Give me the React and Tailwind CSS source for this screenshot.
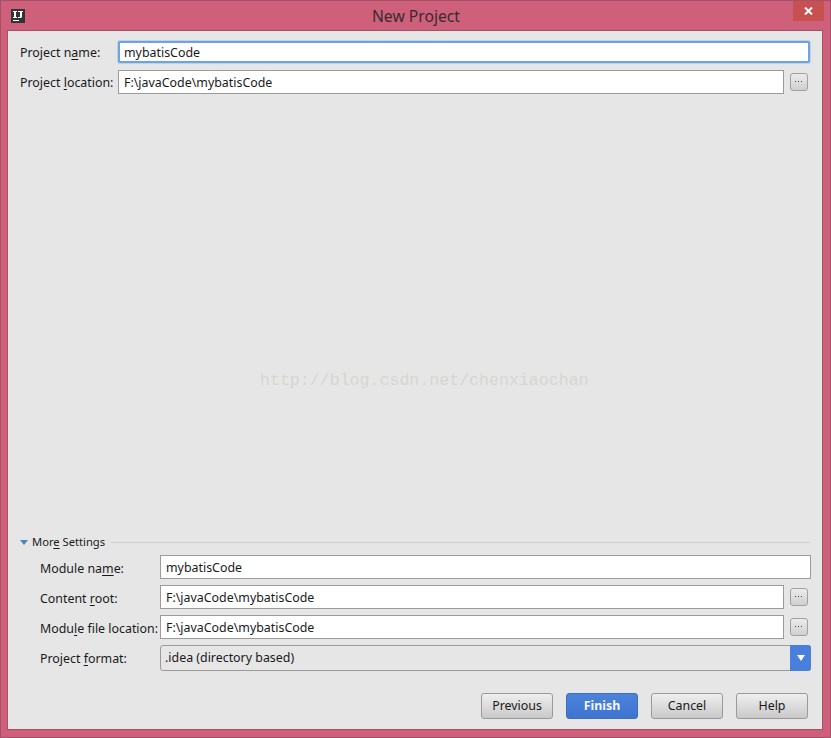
const fontStack = "font-['Noto_Sans',sans-serif]";

function Mnemonic({ before, letter, after }) {
  return (
    <span className="whitespace-nowrap">
      {before}
      <span className="underline underline-offset-2">{letter}</span>
      {after}
    </span>
  );
}

function TextField({ value, className = "" }) {
  return (
    <div className={`flex h-[24px] items-center border border-[#9b9b9b] bg-white pl-[5px] pt-[2px] text-[#1a1a1a] ${className}`}>
      {value}
    </div>
  );
}

function BrowseButton() {
  return (
    <button className="flex h-[18px] w-[18px] shrink-0 items-center justify-center rounded-[3px] border border-[#a0a0a0] bg-gradient-to-b from-[#ececec] to-[#cfcfcf]">
      <svg width="8" height="2" viewBox="0 0 8 2">
        <rect x="0" y="0" width="1" height="1" fill="#444" />
        <rect x="3" y="0" width="1" height="1" fill="#444" />
        <rect x="6" y="0" width="1" height="1" fill="#444" />
      </svg>
    </button>
  );
}

function FooterButton({ label, primary }) {
  const look = primary
    ? "border-[#3f6fb8] bg-gradient-to-b from-[#4a83dc] to-[#3f74cf] font-bold text-[#f2f6fc]"
    : "border-[#9a9a9a] bg-gradient-to-b from-[#efefef] to-[#c9c9c9] text-[#1a1a1a]";
  return (
    <button className={`h-[26px] w-[72px] rounded-[3px] border text-[12.4px] ${look}`}>{label}</button>
  );
}

export default function App() {
  return (
    <div className={`relative flex h-[738px] w-[831px] flex-col border border-[#a64f68] bg-[#cf607c] ${fontStack}`}>
      {/* title bar */}
      <div className="flex h-[29px] shrink-0 items-start">
        {/* IntelliJ logo */}
        <svg width="14" height="14" viewBox="0 0 14 14" className="ml-[10px] mt-[8px] shrink-0">
          <rect width="14" height="14" fill="#333333" />
          <path d="M2 2H6V3H5V8H6V9H2V8H3V3H2Z M7 2H12V3H11V8L10 9H7V8H9V3H7Z M2 11H8V12H2Z" fill="#fff" />
        </svg>
        <div className="flex-1 pl-[14px] pt-[5px] text-center text-[15.7px] leading-[20px] text-[#3a2a2e]">New Project</div>
        <div className="mr-[6px] flex h-[20px] w-[31px] items-center justify-center bg-[#c75050]">
          <svg width="9" height="8" viewBox="0 0 9 8">
            <path d="M1 0.5 L8 7.5 M8 0.5 L1 7.5" stroke="#fff" strokeWidth="2" />
          </svg>
        </div>
      </div>

      {/* dialog body */}
      <div className="ml-[6px] mr-[7px] mb-[7px] flex min-h-0 flex-1 flex-col border border-[#a64f68] bg-[#e6e6e6] pl-[12px] pr-[12px] text-[12.4px] text-[#1a1a1a]">
        <div className="mt-[10px] flex h-[22px] items-center">
          <div className="w-[98px] shrink-0 pt-[2px]">
            <Mnemonic before="Project n" letter="a" after="me:" />
          </div>
          <div className="flex h-[22px] flex-1 items-center rounded-[2px] border-2 border-[#6ea2e0] bg-white pl-[4px] pt-[2px] shadow-[0_0_0_1px_#bcd3ee]">
            mybatisCode
          </div>
        </div>
        <div className="mt-[7px] flex items-center">
          <div className="w-[98px] shrink-0 pt-[2px]">
            <Mnemonic before="Project " letter="l" after="ocation:" />
          </div>
          <TextField value="F:\javaCode\mybatisCode" className="flex-1" />
          <div className="ml-[6px] mr-[2px]">
            <BrowseButton />
          </div>
        </div>

        <div className="flex-1" />

        {/* more settings */}
        <div className="flex items-center">
          <svg width="8" height="5" viewBox="0 0 8 5" className="mr-[4px]">
            <path d="M0 0 H8 L4 5 Z" fill="#4a86b8" />
          </svg>
          <span className="text-[11.2px]">
            <Mnemonic before="Mor" letter="e" after=" Settings" />
          </span>
          <div className="ml-[6px] h-px flex-1 bg-[#cfcfcf]" />
        </div>

        <div className="mt-[4px] ml-[20px] mr-[-1px] flex flex-col gap-[6px]">
          <div className="flex items-center">
            <div className="w-[120px] shrink-0 pt-[4px]">
              <Mnemonic before="Module na" letter="m" after="e:" />
            </div>
            <TextField value="mybatisCode" className="flex-1" />
          </div>
          <div className="flex items-center">
            <div className="w-[120px] shrink-0 pt-[4px]">
              <Mnemonic before="Content " letter="r" after="oot:" />
            </div>
            <TextField value="F:\javaCode\mybatisCode" className="flex-1" />
            <div className="ml-[6px] mr-[3px]">
              <BrowseButton />
            </div>
          </div>
          <div className="flex items-center">
            <div className="w-[120px] shrink-0 pt-[4px]">
              <Mnemonic before="Modu" letter="l" after="e file location:" />
            </div>
            <TextField value="F:\javaCode\mybatisCode" className="flex-1" />
            <div className="ml-[6px] mr-[3px]">
              <BrowseButton />
            </div>
          </div>
          <div className="flex items-center">
            <div className="w-[120px] shrink-0 pt-[2px]">
              <Mnemonic before="Project " letter="f" after="ormat:" />
            </div>
            <div className="flex h-[26px] flex-1 items-center justify-between rounded-[3px] border border-[#9b9b9b] bg-[#e6e6e6]">
              <span className="pl-[4px]">.idea (directory based)</span>
              <span className="mr-[-1px] flex h-[26px] w-[21px] items-center justify-center rounded-r-[3px] bg-[#4a7fdc]">
                <svg width="8" height="6" viewBox="0 0 8 6">
                  <path d="M0 0 H8 L4 6 Z" fill="#fff" />
                </svg>
              </span>
            </div>
          </div>
        </div>

        <div className="mt-[22px] mb-[10px] flex justify-end gap-[13px] pr-[2px]">
          <FooterButton label="Previous" />
          <FooterButton label="Finish" primary />
          <FooterButton label="Cancel" />
          <FooterButton label="Help" />
        </div>
      </div>

      {/* csdn watermark */}
      <div className="absolute left-[259px] top-[370px] font-['Liberation_Mono',monospace] text-[16.6px] leading-[20px] text-[#d6d6d0]">
        http://blog.csdn.net/chenxiaochan
      </div>
    </div>
  );
}
